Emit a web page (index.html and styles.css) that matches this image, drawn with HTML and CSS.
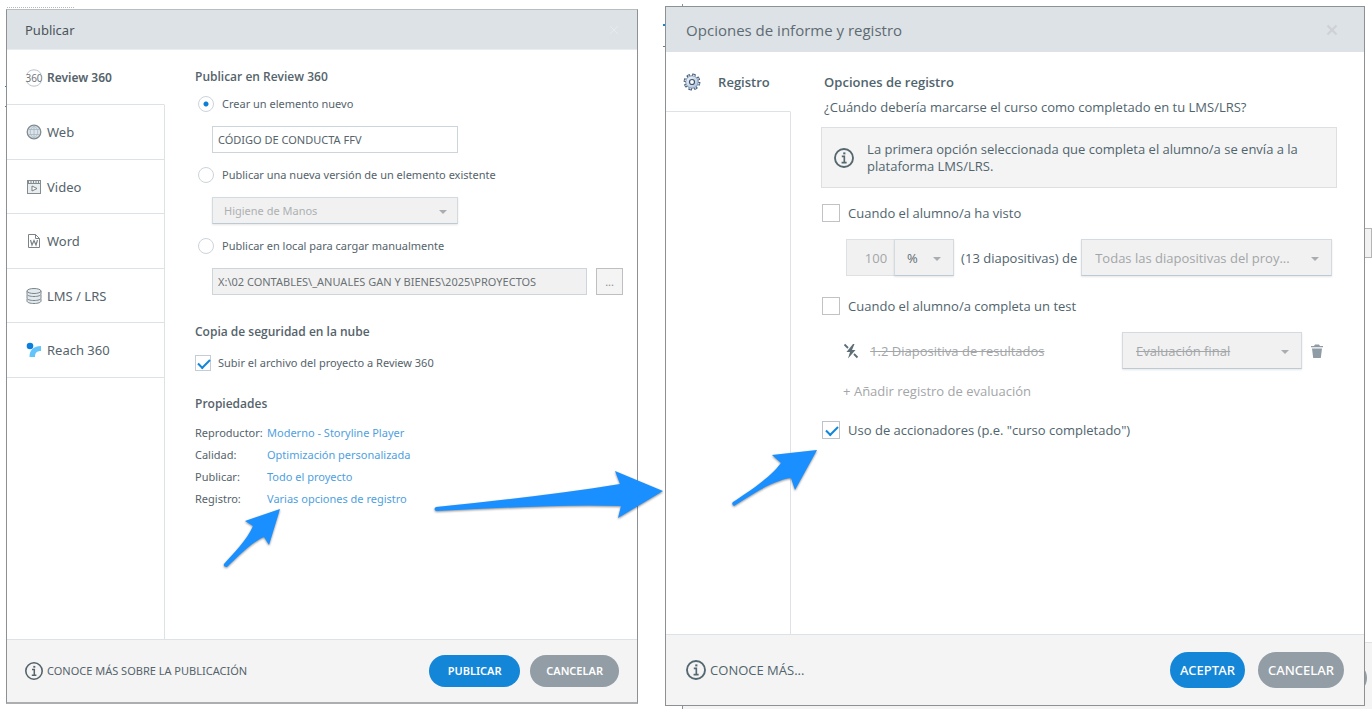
FILE: index.html
```html
<!DOCTYPE html>
<html lang="es">
<head>
    <meta charset="UTF-8">
    <meta name="viewport" content="width=device-width, initial-scale=1.0">
    <title>Publicar</title>
    <link rel="stylesheet" href="styles.css">
</head>
<body>

<!-- Ventanas que quedan detrás de los diálogos -->
<div class="backdrop">
    <div class="backdrop-field"></div>
    <div class="backdrop-footer"><span class="backdrop-button"></span></div>
</div>
<div class="backdrop-marks"></div>
<div class="backdrop-marks left"></div>
<div class="backdrop-title"></div>

<main class="desktop">

    <!-- Diálogo Publicar -->
    <section class="dialog publish">
        <header class="dialog-header">
            <h1>Publicar</h1>
            <button class="close" aria-label="Cerrar">
                <svg width="10" height="10" viewBox="0 0 10 10"><path d="M1 1l8 8M9 1L1 9" stroke="#e8ebee" stroke-width="1"/></svg>
            </button>
        </header>

        <div class="dialog-body">
            <nav class="tabs">
                <a href="#" class="tab active">
                    <svg width="18" height="18" viewBox="0 0 18 18">
                        <path d="M2 5a8 8 0 0 1 14 0M2 13a8 8 0 0 0 14 0" fill="none" stroke="#b9c3c9"/>
                        <text x="9" y="13" text-anchor="middle" class="icon-360">360</text>
                    </svg>
                    Review 360
                </a>
                <a href="#" class="tab">
                    <svg width="18" height="18" viewBox="0 0 18 18" fill="none">
                        <circle cx="9" cy="9" r="6.8" fill="#dce4e9" stroke="#838b8f" stroke-width="1.3"/>
                        <path d="M9 3v12M3 6.5h12M3 11.5h12M9 3c-5 3-5 9 0 12M9 3c5 3 5 9 0 12" stroke="#a9bac5" stroke-width=".9"/>
                    </svg>
                    Web
                </a>
                <a href="#" class="tab">
                    <svg width="18" height="18" viewBox="0 0 18 18" fill="none">
                        <rect x="2.5" y="2.5" width="13" height="13" fill="#e8edf0" stroke="#858c90"/>
                        <path d="M2 5.5h14" stroke="#858c90"/>
                        <path d="M3 4h12" stroke="#858c90" stroke-width="2" stroke-dasharray="1 1.5"/>
                        <path d="M7 8l5 2.5L7 13z" fill="#fff" stroke="#757d81"/>
                    </svg>
                    Video
                </a>
                <a href="#" class="tab">
                    <svg width="18" height="18" viewBox="0 0 18 18" fill="none">
                        <path d="M3.5 2.5h7l4 4v9h-11z" fill="#fff" stroke="#7c8386"/>
                        <path d="M10.5 2.5v4h4" stroke="#7c8386"/>
                        <path d="M5.5 8l1.5 5 2-4.5 2 4.5 1.5-5" stroke="#7c8386" stroke-width="1.2"/>
                    </svg>
                    Word
                </a>
                <a href="#" class="tab">
                    <svg width="18" height="18" viewBox="0 0 18 18" fill="#e3eaee" stroke="#7b868c">
                        <path d="M2 12v2c0 1.5 3 2.5 7 2.5s7-1 7-2.5v-2"/>
                        <path d="M2 8v3c0 1.5 3 2.5 7 2.5s7-1 7-2.5V8"/>
                        <path d="M2 4v3c0 1.5 3 2.5 7 2.5s7-1 7-2.5V4"/>
                        <ellipse cx="9" cy="4" rx="7" ry="2.5"/>
                    </svg>
                    LMS / LRS
                </a>
                <a href="#" class="tab">
                    <svg width="18" height="18" viewBox="0 0 18 18">
                        <circle cx="5" cy="5" r="3.3" fill="#0b7fe0"/>
                        <path d="M4.5 16c0-7 4-11 11.500-11v5c-4.500 0-6 2-6 6z" fill="#62c4fb"/>
                    </svg>
                    Reach 360
                </a>
                <div class="tabs-rest"></div>
            </nav>

            <form class="content">
                <h2>Publicar en Review 360</h2>

                <label class="option first"><input type="radio" name="target" checked>Crear un elemento nuevo</label>
                <div class="field">
                    <input type="text" class="text short" value="CÓDIGO DE CONDUCTA FFV" aria-label="Nombre del elemento">
                </div>

                <label class="option"><input type="radio" name="target">Publicar una nueva versión de un elemento existente</label>
                <div class="field">
                    <span class="select short">
                        <select disabled aria-label="Elemento existente"><option>Higiene de Manos</option></select>
                    </span>
                </div>

                <label class="option"><input type="radio" name="target">Publicar en local para cargar manualmente</label>
                <div class="field">
                    <input type="text" class="text path" value="X:\02 CONTABLES\_ANUALES GAN Y BIENES\2025\PROYECTOS" disabled aria-label="Carpeta local">
                    <button type="button" class="browse">...</button>
                </div>

                <h2 class="cloud-title">Copia de seguridad en la nube</h2>
                <label class="check"><input type="checkbox" checked>Subir el archivo del proyecto a Review 360</label>

                <h2 class="props-title">Propiedades</h2>
                <dl class="props">
                    <dt>Reproductor:</dt><dd><a href="#">Moderno - Storyline Player</a></dd>
                    <dt>Calidad:</dt><dd><a href="#">Optimización personalizada</a></dd>
                    <dt>Publicar:</dt><dd><a href="#">Todo el proyecto</a></dd>
                    <dt>Registro:</dt><dd><a href="#">Varias opciones de registro</a></dd>
                </dl>
            </form>
        </div>

        <footer class="dialog-footer">
            <a href="#" class="more">
                <svg width="20" height="20" viewBox="0 0 20 20" fill="none" stroke="#55636b">
                    <circle cx="10" cy="10" r="8.2" stroke-width="1.6"/>
                    <path d="M8 8.5h2.300V14M7.800 14.200h4.600" stroke-width="1.5"/>
                    <path d="M9.300 5.800h2" stroke-width="1.8"/>
                </svg>
                CONOCE MÁS SOBRE LA PUBLICACIÓN
            </a>
            <button class="btn primary">PUBLICAR</button>
            <button class="btn">CANCELAR</button>
        </footer>
    </section>

    <!-- Diálogo Opciones de informe y registro -->
    <section class="dialog tracking">
        <header class="dialog-header">
            <h1>Opciones de informe y registro</h1>
            <button class="close" aria-label="Cerrar">
                <svg width="12" height="12" viewBox="0 0 12 12"><path d="M1.500 1.500l9 9M10.500 1.500l-9 9" stroke="#cfd2d4" stroke-width="2.400"/></svg>
            </button>
        </header>

        <div class="dialog-body">
            <nav class="tabs">
                <a href="#" class="tab active">
                    <svg width="18" height="18" viewBox="0 0 18 18">
                        <defs>
                            <linearGradient id="gear" x1="0" y1="0" x2="1" y2="1">
                                <stop offset="0" stop-color="#f4f7fb"/>
                                <stop offset="1" stop-color="#a9bdd6"/>
                            </linearGradient>
                        </defs>
                        <circle cx="9" cy="9" r="7.200" fill="none" stroke="#3b5573" stroke-width="2.400" stroke-dasharray="3.400 2.255"/>
                        <circle cx="9" cy="9" r="6.300" fill="url(#gear)" stroke="#5d7592" stroke-width=".8"/>
                        <circle cx="9" cy="9" r="6.900" fill="none" stroke="#d3deea" stroke-width="1.400" stroke-dasharray="1.600 3.819" stroke-dashoffset="-.9"/>
                        <circle cx="9" cy="9" r="2.500" fill="#fff" stroke="#3b5573" stroke-width="1.200"/>
                    </svg>
                    Registro
                </a>
                <div class="tabs-rest"></div>
            </nav>

            <form class="content">
                <h2>Opciones de registro</h2>
                <p class="question">¿Cuándo debería marcarse el curso como completado en tu LMS/LRS?</p>

                <div class="notice">
                    <svg width="22" height="22" viewBox="0 0 20 20" fill="none" stroke="#55676f">
                        <circle cx="10" cy="10" r="8.2" stroke-width="1.7"/>
                        <path d="M8 8.5h2.300V14M7.800 14.200h4.600" stroke-width="1.5"/>
                        <path d="M9.300 5.800h2" stroke-width="1.8"/>
                    </svg>
                    <p>La primera opción seleccionada que completa el alumno/a se envía a la plataforma LMS/LRS.</p>
                </div>

                <label class="check viewed"><input type="checkbox">Cuando el alumno/a ha visto</label>
                <div class="row">
                    <input type="text" class="amount" value="100" disabled aria-label="Cantidad">
                    <span class="select unit">
                        <select disabled aria-label="Unidad"><option>%</option></select>
                    </span>
                    <span class="of">(13 diapositivas) de</span>
                    <span class="select slides">
                        <select disabled aria-label="Diapositivas"><option>Todas las diapositivas del proy...</option></select>
                    </span>
                </div>

                <label class="check"><input type="checkbox">Cuando el alumno/a completa un test</label>
                <div class="row quiz">
                    <svg width="16" height="16" viewBox="0 0 16 16">
                        <path d="M10 1L3.500 9H7l-2 6.500L12.500 7H9l2.500-6z" fill="#5d6e76"/>
                        <path d="M1.500 1.500l3.500 3.500M11 11l3.500 3.500" stroke="#5d6e76" stroke-width="1.800"/>
                    </svg>
                    <del>1.2 Diapositiva de resultados</del>
                    <span class="select result">
                        <select disabled aria-label="Evaluación"><option>Evaluación final</option></select>
                    </span>
                    <button type="button" class="trash" aria-label="Eliminar">
                        <svg width="12" height="14" viewBox="0 0 12 14" fill="#8f9ca5"><path d="M0 2h3l1-1.500h4L9 2h3v1.300H0zM1 4.500h10L9.800 14H2.200z"/></svg>
                    </button>
                </div>
                <button type="button" class="add" disabled>+ Añadir registro de evaluación</button>

                <label class="check"><input type="checkbox" checked>Uso de accionadores (p.e. "curso completado")</label>
            </form>
        </div>

        <footer class="dialog-footer">
            <a href="#" class="more">
                <svg width="22" height="22" viewBox="0 0 20 20" fill="none" stroke="#55676f">
                    <circle cx="10" cy="10" r="8.2" stroke-width="1.7"/>
                    <path d="M8 8.5h2.300V14M7.800 14.200h4.600" stroke-width="1.5"/>
                    <path d="M9.300 5.800h2" stroke-width="1.8"/>
                </svg>
                CONOCE MÁS...
            </a>
            <button class="btn primary">ACEPTAR</button>
            <button class="btn">CANCELAR</button>
        </footer>
    </section>
</main>

<!-- Flechas de la guía -->
<svg class="arrows" width="1372" height="712" viewBox="0 0 1372 712" fill="#1a8fff">
    <path d="M280 509L245 521l8 5C247 540 233 554 224 564q-1 3 3 3C238 556 252 542 264 537l5 8z"/>
    <path d="M663 491L615 471l5 13C560 494 495 501 436 507q-3 2 0 4C500 508 565 504 621 506l-3 12z"/>
    <path d="M817 450L772 455l9 8C770 478 748 492 733 502q-2 2 1 4C752 494 774 480 791 478l4 12z"/>
</svg>

</body>
</html>
```

FILE: styles.css
```css
* {
    box-sizing: border-box;
}

body {
    margin: 0;
    background-color: #fff;
    font-family: "Noto Sans", "Open Sans", sans-serif;
    font-size: 11px;
    line-height: 18px;
    color: #55636b;
}

h1, h2, p, dl, dd {
    margin: 0;
}

a {
    color: inherit;
    text-decoration: none;
}

input, select, button {
    margin: 0;
    font: inherit;
    color: inherit;
}

svg {
    flex: none;
}

.desktop {
    position: relative;
    display: flex;
    gap: 27px;
    min-height: 100vh;
    padding: 6px 7px 6px 6px;
}

/* Ventanas de fondo */
.backdrop {
    position: absolute;
    top: 4px;
    left: 682px;
    right: 0;
    bottom: 3px;
    border-left: 1px solid #8c8f91;
    overflow: hidden;
}

.backdrop-field {
    position: absolute;
    top: 224px;
    right: 0;
    width: 40px;
    height: 30px;
    border: 1px solid #b5b5b5;
    background-color: #f2f2f2;
}

.backdrop-footer {
    position: absolute;
    left: 0;
    right: 0;
    bottom: 0;
    height: 67px;
    border-top: 1px solid #dfe3e6;
    background-color: #f4f4f4;
}

.backdrop-button {
    position: absolute;
    top: 19px;
    right: 5px;
    width: 85px;
    height: 32px;
    border-radius: 16px;
    background-color: #929da5;
}

.backdrop-marks {
    position: absolute;
    top: 24px;
    left: 663px;
    width: 4px;
    height: 23px;
    border-top: 2px solid #1486d8;
    border-bottom: 1px solid #6e7b83;
}

.backdrop-marks.left {
    top: 86px;
    left: 5px;
    height: 21px;
    border-top-width: 1px;
}

.backdrop-title {
    position: absolute;
    top: 7px;
    left: 7px;
    width: 67px;
    border-top: 1px dotted #b5b8ba;
}

/* Diálogos */
.dialog {
    position: relative;
    display: flex;
    flex-direction: column;
    min-width: 0;
    border: 1px solid #8e9193;
    background-color: #fff;
}

.publish {
    flex: 632 1 0;
    margin: 3px 0 2px;
    border-top-color: #b9bdbf;
    border-bottom: 2px solid #acaeaf;
}

.tracking {
    flex: 700 1 0;
    font-family: "Open Sans", "Noto Sans", sans-serif;
    font-size: 13px;
    color: #50646d;
}

.dialog-header {
    display: flex;
    align-items: center;
    justify-content: space-between;
    height: 40px;
    padding: 0 18px;
    border-bottom: 1px solid #e9edef;
    background-color: #dde2e6;
}

.tracking .dialog-header {
    height: 45px;
    padding: 0 26px 0 20px;
    border-bottom: none;
}

.dialog-header h1 {
    font-size: 13px;
    font-weight: 400;
    color: #4b545a;
}

.tracking h1 {
    font-size: 15px;
    line-height: 20px;
    color: #5d6b73;
}

.close {
    display: flex;
    padding: 0;
    border: none;
    background: none;
}

.dialog-body {
    display: flex;
    flex: 1;
}

/* Pestañas */
.tabs {
    display: grid;
    grid-template-rows: 55px 55px 54px 55px 54px 55px 1fr;
    flex: none;
    width: 158px;
}

.tab {
    display: flex;
    align-items: center;
    gap: 4px;
    padding-left: 18px;
    border-right: 1px solid #dde2e7;
    border-bottom: 1px solid #dde2e7;
    font-size: 13px;
}

.tab.active {
    border-right-color: transparent;
    font-weight: 600;
}

.publish .tab.active {
    padding-top: 2px;
    font-size: 12px;
}

.tabs-rest {
    border-right: 1px solid #dde2e7;
}

.icon-360 {
    font-size: 10px;
    font-weight: 400;
    fill: #6f777b;
}

.tracking .tabs {
    grid-template-rows: 60px 1fr;
    width: 125px;
}

.tracking .tab {
    gap: 17px;
    padding-left: 17px;
}

/* Contenido */
.content {
    display: flex;
    flex-direction: column;
    align-items: flex-start;
    flex: 1;
    min-width: 0;
    padding: 18px 14px 18px 30px;
}

h2 {
    font-family: "Open Sans", "Noto Sans", sans-serif;
    font-size: 12px;
    font-weight: 600;
}

.option {
    display: flex;
    align-items: center;
    gap: 8px;
    margin-top: 13px;
    padding-left: 3px;
}

.option.first {
    margin-top: 9px;
}

input[type="radio"] {
    appearance: none;
    width: 16px;
    height: 16px;
    border: 1px solid #ccd4d9;
    border-radius: 50%;
    background-color: #fff;
}

input[type="radio"]:checked {
    background-image: radial-gradient(circle, #0b7fd6 0, #0b7fd6 2px, transparent 3px);
}

.field {
    display: flex;
    align-self: stretch;
    gap: 9px;
    margin-top: 13px;
    padding-left: 17px;
}

.text {
    height: 27px;
    padding: 0 5px;
    border: 1px solid #ccd5dc;
    background-color: #fff;
}

.short {
    width: 246px;
}

.path {
    flex: 1;
    min-width: 0;
    background-color: #f1f1f1;
    color: #6b7275;
}

.browse {
    width: 27px;
    height: 27px;
    padding: 0;
    border: 1px solid #bdbfc1;
    background-color: #f4f4f4;
    color: #8a8f92;
}

.select {
    position: relative;
    display: block;
    height: 27px;
}

.select select {
    appearance: none;
    width: 100%;
    height: 100%;
    padding: 0 11px;
    border: 1px solid #d3dbe1;
    border-bottom-color: #bccad5;
    border-radius: 0;
    background-color: #f1f1f1;
    box-shadow: 0 1px 2px rgba(0, 0, 0, 0.1);
    color: #adb0b2;
    opacity: 1;
}

/* Triángulo del desplegable */
.select::after {
    content: "";
    position: absolute;
    top: calc(50% - 1px);
    right: 11px;
    border: 4px solid transparent;
    border-top-color: #a9adb0;
    border-bottom: none;
}

.cloud-title {
    margin-top: 28px;
}

.check {
    display: flex;
    align-items: center;
    gap: 7px;
    margin-top: 13px;
}

input[type="checkbox"] {
    appearance: none;
    width: 16px;
    height: 16px;
    border: 1px solid #c3cdd3;
    background-color: #fff;
}

input[type="checkbox"]:checked::before {
    content: "";
    display: block;
    width: 10px;
    height: 5px;
    margin: 3px 0 0 2px;
    border-left: 2px solid #1486d8;
    border-bottom: 2px solid #1486d8;
    transform: rotate(-45deg);
}

.props-title {
    margin-top: 23px;
}

.props {
    display: grid;
    grid-template-columns: 72px auto;
    margin-top: 9px;
    line-height: 22px;
    white-space: nowrap;
}

.props a {
    color: #4f9fe0;
}

/* Opciones de registro */
.tracking .content {
    padding: 21px 27px 21px 30px;
}

.tracking h2 {
    margin-left: 3px;
    font-size: 13px;
}

.question {
    margin: 7px 0 0 3px;
}

.notice {
    display: flex;
    align-items: center;
    align-self: stretch;
    gap: 12px;
    margin-top: 11px;
    padding: 13px 25px 12px 11px;
    border: 1px solid #dde0e2;
    background-color: #f4f4f4;
    line-height: 17px;
}

.tracking .check {
    gap: 8px;
    margin-top: 21px;
    padding-left: 1px;
}

.tracking .viewed {
    margin-top: 16px;
}

.tracking input[type="checkbox"] {
    width: 18px;
    height: 18px;
    border-color: #bfc3c5;
}

.tracking input[type="checkbox"]:checked::before {
    margin: 4px 0 0 3px;
}

.row {
    display: flex;
    align-items: center;
    align-self: stretch;
    margin: 17px 5px 0 25px;
}

.amount {
    width: 48px;
    height: 37px;
    padding: 0 7px;
    border: 1px solid #dde1e4;
    border-right: none;
    background-color: #f1f1f1;
    color: #a3a6a8;
    text-align: right;
}

.tracking .select {
    height: 37px;
}

.tracking .select select {
    padding: 0 13px;
    color: #a3a6a8;
}

.unit {
    width: 60px;
}

.tracking .unit select {
    padding: 0 12px;
    color: #5d6b73;
}

.tracking .select::after {
    right: 13px;
}

.of {
    margin: 0 4px 0 7px;
    white-space: nowrap;
}

.slides {
    flex: 1;
    min-width: 0;
}

.quiz {
    margin: 17px 14px 0 22px;
    color: #a3a6a8;
}

.quiz del {
    flex: 1;
    margin-left: 11px;
}

.result {
    width: 180px;
}

.result select {
    text-decoration: line-through;
}

.trash {
    display: flex;
    margin-left: 9px;
    padding: 0;
    border: none;
    background: none;
}

.add {
    margin: 13px 0 0 22px;
    padding: 0;
    border: none;
    background: none;
    color: #a3a6a8;
}

/* Pie */
.dialog-footer {
    display: flex;
    align-items: center;
    height: 63px;
    padding: 0 18px 0 17px;
    border-top: 1px solid #dde2e6;
    background-color: #f4f4f4;
}

.tracking .dialog-footer {
    height: 71px;
    padding: 0 20px 0 19px;
}

.more {
    display: flex;
    align-items: center;
    flex: 1;
    gap: 3px;
}

.btn {
    min-width: 89px;
    height: 32px;
    margin-left: 10px;
    padding: 0 10px;
    border: none;
    border-radius: 16px;
    background-color: #929da5;
    color: #fff;
    font-family: "Noto Sans", "Open Sans", sans-serif;
    font-weight: 600;
}

.btn.primary {
    min-width: 91px;
    background-color: #1486d8;
}

.tracking .btn {
    min-width: 75px;
    height: 36px;
    margin-left: 13px;
    border-radius: 18px;
    font-weight: 500;
}

/* Flechas por encima de los dos diálogos */
.arrows {
    position: absolute;
    top: 0;
    left: 0;
    pointer-events: none;
    filter: drop-shadow(0 1px 1px rgba(0, 0, 0, 0.45));
}
```
